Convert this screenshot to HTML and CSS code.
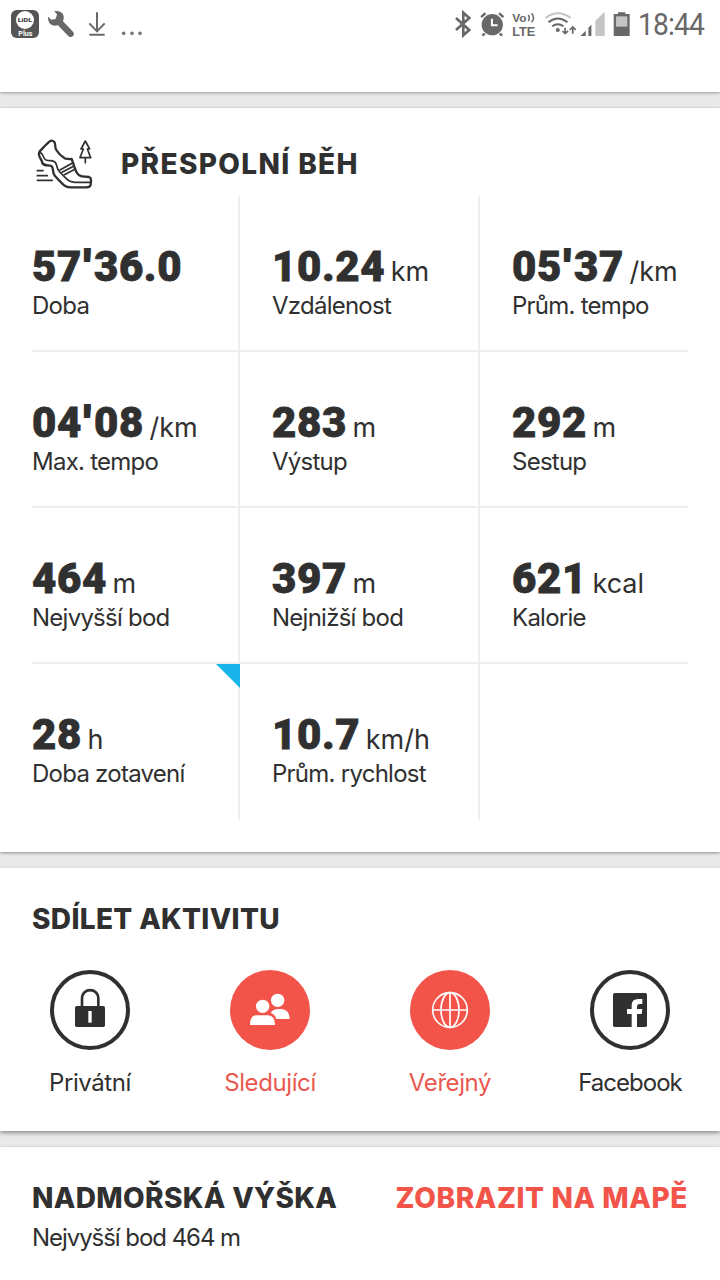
FILE: index.html
```html
<!DOCTYPE html>
<html lang="cs">
<head>
    <meta charset="UTF-8">
    <meta name="viewport" content="width=device-width, initial-scale=1.0">
    <title>Přespolní běh</title>
    <link rel="stylesheet" href="styles.css">
</head>
<body>
  <div class="statusbar">
    <svg class="status-left" viewBox="0 0 450 144">
        <rect x="33" y="30" width="84" height="84" rx="17" fill="#555"/>
        <circle cx="75" cy="60" r="27" fill="#fff"/>
        <text x="53" y="66" textLength="44" lengthAdjust="spacingAndGlyphs" class="lidl">LiDL</text>
        <text x="55" y="108" textLength="42" lengthAdjust="spacingAndGlyphs" class="plus">Plus</text>
        <path d="M163 34 L171 43 L167 57 L154 59 L144 50 C143 65 151 77 165 77 L174 76 L204 107 C213 117 228 105 219 95 L189 64 C198 43 181 30 163 34Z" fill="#686868"/>
        <path d="M291 37V96M268 70L291 94L314 70M268 104H314" fill="none" stroke="#686868" stroke-width="6"/>
        <g fill="#777"><circle cx="371" cy="100" r="5.5"/><circle cx="396" cy="100" r="5.5"/><circle cx="420" cy="100" r="5.5"/></g>
    </svg>
    <div class="status-right">
      <svg class="status-icons" viewBox="0 0 580 144">
        <path d="M48 54L88 90L70 106V38L88 54L48 90" fill="none" stroke="#686868" stroke-width="8"/>
        <g fill="#686868">
            <circle cx="157" cy="74" r="32"/>
            <path d="M121 49L134 37L139 42L126 54ZM175 42L180 37L193 49L188 54ZM130 98L138 103L130 109L125 105ZM176 103L184 98L189 105L184 109Z"/>
        </g>
        <path d="M156 56V76H173" fill="none" stroke="#fff" stroke-width="6"/>
        <text x="217" y="66" textLength="43" lengthAdjust="spacingAndGlyphs" class="volte">Vo</text>
        <path d="M265 45Q272 54 265 63M275 40Q287 54 275 67" fill="none" stroke="#686868" stroke-width="4.5"/>
        <text x="217" y="107" textLength="69" lengthAdjust="spacingAndGlyphs" class="lte">LTE</text>
        <g fill="none" stroke="#686868" stroke-width="6">
            <path d="M317 54Q354 25 393 54" stroke="#c4c4c4"/>
            <path d="M326 67Q354 44 383 67M337 79Q354 66 371 79"/>
            <path d="M376 83V100M368 93L376 101L385 93M399 101V84M390 90L399 81L408 90" stroke-width="5"/>
        </g>
        <circle cx="354" cy="90" r="6" fill="#686868"/>
        <path d="M422 108L438 92V108ZM446 83L455 74V108H446Z" fill="#686868"/>
        <path d="M467 62L495 35V108H467Z" fill="#c4c4c4"/>
        <path d="M535 37H557V42H570V108H522V42H535Z" fill="#686868"/>
        <path d="M529 49H563V80H529Z" fill="#c4c4c4"/>
      </svg>
      <span class="clock">18:44</span>
    </div>
  </div>

  <div class="card stats">
    <div class="sport">
        <svg class="shoe" viewBox="102 174 180 162">
            <g fill="none" stroke="#303030" stroke-linejoin="round" stroke-linecap="round">
                <path stroke-width="7" d="M119 214C128 205 138 193 149 184Q156 179 163 186C168 193 163 200 169 210Q177 224 194 235Q206 238 215 237L219 248C227 275 233 288 246 289L267 291Q274 293 273 304L272 314Q270 322 259 322H218C198 323 190 316 180 304L165 288C155 275 162 263 154 258C145 254 134 260 127 249C128 238 110 231 119 214Z"/>
                <path stroke-width="5" d="M122 218C132 224 128 235 138 240C151 245 159 237 167 249C173 259 169 266 179 276L199 296Q208 306 225 307H271"/>
                <path stroke-width="5" d="M180 270L216 250M186 277L222 258M193 284L226 267"/>
                <path stroke-width="5" d="M112 272H129M112 287H142M112 301H157"/>
                <path stroke-width="5" d="M256 183L243 207H250L240 233H272L262 207H269ZM256 233V248"/>
            </g>
        </svg>
        <h2 class="title-sport">PŘESPOLNÍ BĚH</h2>
    </div>
    <div class="grid">
        <div class="cell"><div class="value"><b>57<i>'</i>36.0</b></div><div class="label">Doba</div></div>
        <div class="cell"><div class="value"><b>10.24</b> <span>km</span></div><div class="label">Vzdálenost</div></div>
        <div class="cell"><div class="value"><b>05<i>'</i>37</b> <span>/km</span></div><div class="label">Prům. tempo</div></div>
        <div class="cell"><div class="value"><b>04<i>'</i>08</b> <span>/km</span></div><div class="label">Max. tempo</div></div>
        <div class="cell"><div class="value"><b>283</b> <span>m</span></div><div class="label">Výstup</div></div>
        <div class="cell"><div class="value"><b>292</b> <span>m</span></div><div class="label">Sestup</div></div>
        <div class="cell"><div class="value"><b>464</b> <span>m</span></div><div class="label">Nejvyšší bod</div></div>
        <div class="cell"><div class="value"><b>397</b> <span>m</span></div><div class="label">Nejnižší bod</div></div>
        <div class="cell"><div class="value"><b>621</b> <span>kcal</span></div><div class="label">Kalorie</div></div>
        <div class="cell marked"><div class="value"><b>28</b> <span>h</span></div><div class="label">Doba zotavení</div></div>
        <div class="cell"><div class="value"><b>10.7</b> <span>km/h</span></div><div class="label">Prům. rychlost</div></div>
        <div class="cell"></div>
    </div>
  </div>

  <div class="card share">
    <h2 class="title-share">SDÍLET AKTIVITU</h2>
    <div class="options">
        <div class="option">
            <svg class="round" viewBox="0 0 240 240">
                <circle cx="120" cy="120" r="114" fill="#fff" stroke="#303030" stroke-width="12"/>
                <path d="M96 112V86C96 52 145 52 145 86V112" fill="none" stroke="#303030" stroke-width="8"/>
                <rect x="75" y="108" width="90" height="63" rx="5" fill="#303030"/>
                <rect x="115" y="123" width="10" height="35" fill="#fff"/>
            </svg>
            <span>Privátní</span>
        </div>
        <div class="option active">
            <svg class="round" viewBox="0 0 240 240">
                <circle cx="120" cy="120" r="120" fill="#f2544a"/>
                <g fill="#fff">
                    <circle cx="98" cy="109" r="20"/>
                    <circle cx="143" cy="91" r="20"/>
                    <path d="M60 165C61 129 80 136 98 136S134 132 135 165Z"/>
                    <path d="M122 129Q129 117 145 117C164 117 178 121 179 147H139Q135 133 122 129Z"/>
                </g>
            </svg>
            <span>Sledující</span>
        </div>
        <div class="option active">
            <svg class="round" viewBox="0 0 240 240">
                <circle cx="120" cy="120" r="120" fill="#f2544a"/>
                <g fill="none" stroke="#fff" stroke-width="5">
                    <circle cx="120" cy="120" r="52"/>
                    <ellipse cx="120" cy="120" rx="27" ry="52"/>
                    <path d="M120 68V172M68 120H172"/>
                </g>
            </svg>
            <span>Veřejný</span>
        </div>
        <div class="option facebook">
            <svg class="round" viewBox="0 0 240 240">
                <circle cx="120" cy="120" r="114" fill="#fff" stroke="#303030" stroke-width="12"/>
                <rect x="69" y="69" width="102" height="102" rx="5" fill="#303030"/>
                <path d="M125 171V132H111V117H125V106Q125 87 145 87H157V102H149Q141 102 141 110V117H157L155 132H141V171Z" fill="#fff"/>
            </svg>
            <span>Facebook</span>
        </div>
    </div>
  </div>

  <div class="card altitude">
    <div class="altitude-head">
        <h2 class="title-altitude">NADMOŘSKÁ VÝŠKA</h2>
        <a class="map-link">ZOBRAZIT NA MAPĚ</a>
    </div>
    <div class="label">Nejvyšší bod 464 m</div>
  </div>
</body>
</html>
```
FILE: styles.css
```css
* {
    box-sizing: border-box;
}
body {
    font-family: Inter, "Liberation Sans", sans-serif;
    margin: 0;
    height: 1280px;
    overflow: hidden;
    background-color: #e9e9e9;
    color: #303030;
}
.statusbar {
    display: flex;
    justify-content: space-between;
    height: 92px;
    background-color: #fff;
    box-shadow: 0 1px 3px rgba(0, 0, 0, 0.35);
}
.status-left {
    width: 150px;
    height: 48px;
}
.status-right {
    display: flex;
    width: 280px;
}
.status-icons {
    width: 193px;
    height: 48px;
    flex: none;
}
.lidl {
    font: 900 17px Roboto, sans-serif;
    fill: #444;
}
.plus {
    font: 700 24px Roboto, sans-serif;
    fill: #fff;
}
.volte {
    font: 700 33px "Liberation Sans", sans-serif;
    fill: #686868;
}
.lte {
    font: 700 36px "Liberation Sans", sans-serif;
    fill: #686868;
}
.clock {
    font: 400 31px/48px Roboto, sans-serif;
    color: #686868;
    margin-left: 5px;
    padding-top: 1px;
    letter-spacing: -0.9px;
    transform: scaleX(0.91);
    transform-origin: left;
}
.card {
    background-color: #fff;
    box-shadow: 0 1px 3px rgba(0, 0, 0, 0.4);
    margin-bottom: 16px;
}
h2, .map-link {
    margin: 0;
    font-size: 28px;
    font-weight: 800;
    line-height: 36px;
    letter-spacing: 0.35px;
    white-space: nowrap;
}
.stats {
    height: 744px;
    margin-top: 16px;
}
.sport {
    display: flex;
    height: 88px;
    padding: 30px 0 0 34px;
}
.shoe {
    width: 60px;
    height: 54px;
    margin-right: 27px;
}
.sport .title-sport {
    margin-top: 8px;
    letter-spacing: 1.35px;
}
.grid {
    display: grid;
    grid-template-columns: 208px 240px 208px;
    grid-auto-rows: 156px;
    padding: 0 32px;
}
.cell {
    padding: 47px 0 0 32px;
    border-right: 2px solid #eee;
    border-bottom: 2px solid #eee;
    white-space: nowrap;
}
.cell:nth-child(3n+1) {
    padding-left: 0;
}
.cell:nth-child(3n) {
    border-right: none;
}
.cell:nth-child(n+10) {
    border-bottom: none;
}
.marked {
    position: relative;
}
.marked::after {
    content: "";
    position: absolute;
    top: 0;
    right: -2px;
    width: 24px;
    height: 24px;
    background-color: #18b4ea;
    clip-path: polygon(0 0, 100% 0, 100% 100%);
}
.value {
    height: 47px;
    line-height: 48px;
    font-size: 27px;
    word-spacing: -2px;
}
.value b {
    font-family: Roboto, "Liberation Sans", sans-serif;
    font-size: 42px;
    font-weight: 900;
    letter-spacing: 0.6px;
    -webkit-text-stroke: 0.8px #303030;
}
.value i {
    font-style: normal;
    padding: 0 3px 0 2px;
    -webkit-text-stroke: 2px #303030;
}
.label {
    font-size: 24px;
    line-height: 32px;
    letter-spacing: -0.75px;
}
.share {
    height: 263px;
    padding-top: 33px;
    box-shadow: 0 2px 4px rgba(0, 0, 0, 0.4);
}
.title-share {
    padding-left: 32px;
}
.options {
    display: grid;
    grid-template-columns: repeat(4, 180px);
    margin-top: 33px;
}
.option {
    display: flex;
    flex-direction: column;
    align-items: center;
    gap: 17px;
    font-size: 24px;
    line-height: 32px;
    letter-spacing: -0.4px;
}
.round {
    width: 80px;
    height: 80px;
}
.active {
    color: #e8594f;
}
.facebook {
    letter-spacing: -1px;
}
.altitude {
    height: 140px;
    padding: 33px 32px 0;
}
.altitude-head {
    display: flex;
    justify-content: space-between;
}
.altitude .label {
    margin-top: 6px;
    letter-spacing: -1.05px;
}
.map-link {
    color: #f2544a;
    letter-spacing: 0.6px;
}
```
